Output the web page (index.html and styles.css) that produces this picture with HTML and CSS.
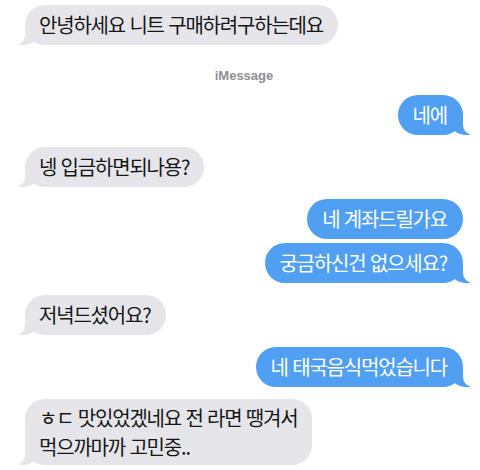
FILE: index.html
```html
<!DOCTYPE html>
<html lang="ko">
<head>
<meta charset="utf-8">
<link rel="stylesheet" href="styles.css">
</head>
<body>
<div class="chat">
  <div class="group them">
    <div class="bubble tail">안녕하세요 니트 구매하려구하는데요</div>
  </div>
  <div class="label">iMessage</div>
  <div class="group me">
    <div class="bubble tail">네에</div>
  </div>
  <div class="group them">
    <div class="bubble tail">넹 입금하면되나용?</div>
  </div>
  <div class="group me">
    <div class="bubble">네 계좌드릴가요</div>
    <div class="bubble tail">궁금하신건 없으세요?</div>
  </div>
  <div class="group them">
    <div class="bubble tail">저녁드셨어요?</div>
  </div>
  <div class="group me">
    <div class="bubble tail">네 태국음식먹었습니다</div>
  </div>
  <div class="group them">
    <div class="bubble tail multi"><span class="line">ㅎㄷ 맛있었겠네요 전 라면 땡겨서</span><span class="line">먹으까마까 고민중..</span></div>
  </div>
</div>
</body>
</html>
```

FILE: styles.css
```css
* { box-sizing: border-box; }
html, body { margin: 0; background: #ffffff; }
body {
  padding: 5px 17px 0 25px;
  font-family: "Noto Sans CJK KR", "Noto Sans", sans-serif;
  overflow: hidden;
}
.chat {
  display: flex;
  flex-direction: column;
  gap: 12px;
}
.group {
  display: flex;
  flex-direction: column;
  gap: 4px;
}
.group.them { align-items: flex-start; }
.group.me { align-items: flex-end; }
.bubble {
  position: relative;
  font-size: 20px;
  line-height: 26px;
  letter-spacing: -1.2px;
  padding: 7px 15px 7px 14px;
  border-radius: 20px;
  white-space: nowrap;
}
.bubble.multi {
  display: flex;
  flex-direction: column;
  line-height: 29px;
  padding-top: 4px;
  padding-bottom: 4px;
}
.them .bubble { background: #e5e5ea; color: #161616; }
.me .bubble { background: #519ff3; color: #ffffff; padding: 7px 16px 7px 15px; }
.bubble.tail::before,
.bubble.tail::after {
  content: "";
  position: absolute;
  bottom: 0;
  height: 20px;
}
.them .bubble.tail::before {
  left: -6px;
  width: 20px;
  background: #e5e5ea;
  border-bottom-right-radius: 15px;
}
.them .bubble.tail::after {
  left: -10px;
  width: 10px;
  background: #ffffff;
  border-bottom-right-radius: 10px;
}
.me .bubble.tail::before {
  right: -7px;
  width: 20px;
  background: #519ff3;
  border-bottom-left-radius: 15px;
}
.me .bubble.tail::after {
  right: -10px;
  width: 10px;
  background: #ffffff;
  border-bottom-left-radius: 10px;
}
.label {
  align-self: center;
  margin: 11px 0 -1px 0;
  font-family: "Liberation Sans", Arial, sans-serif;
  font-weight: bold;
  font-size: 13px;
  line-height: 16px;
  color: #8e8e93;
}
```
